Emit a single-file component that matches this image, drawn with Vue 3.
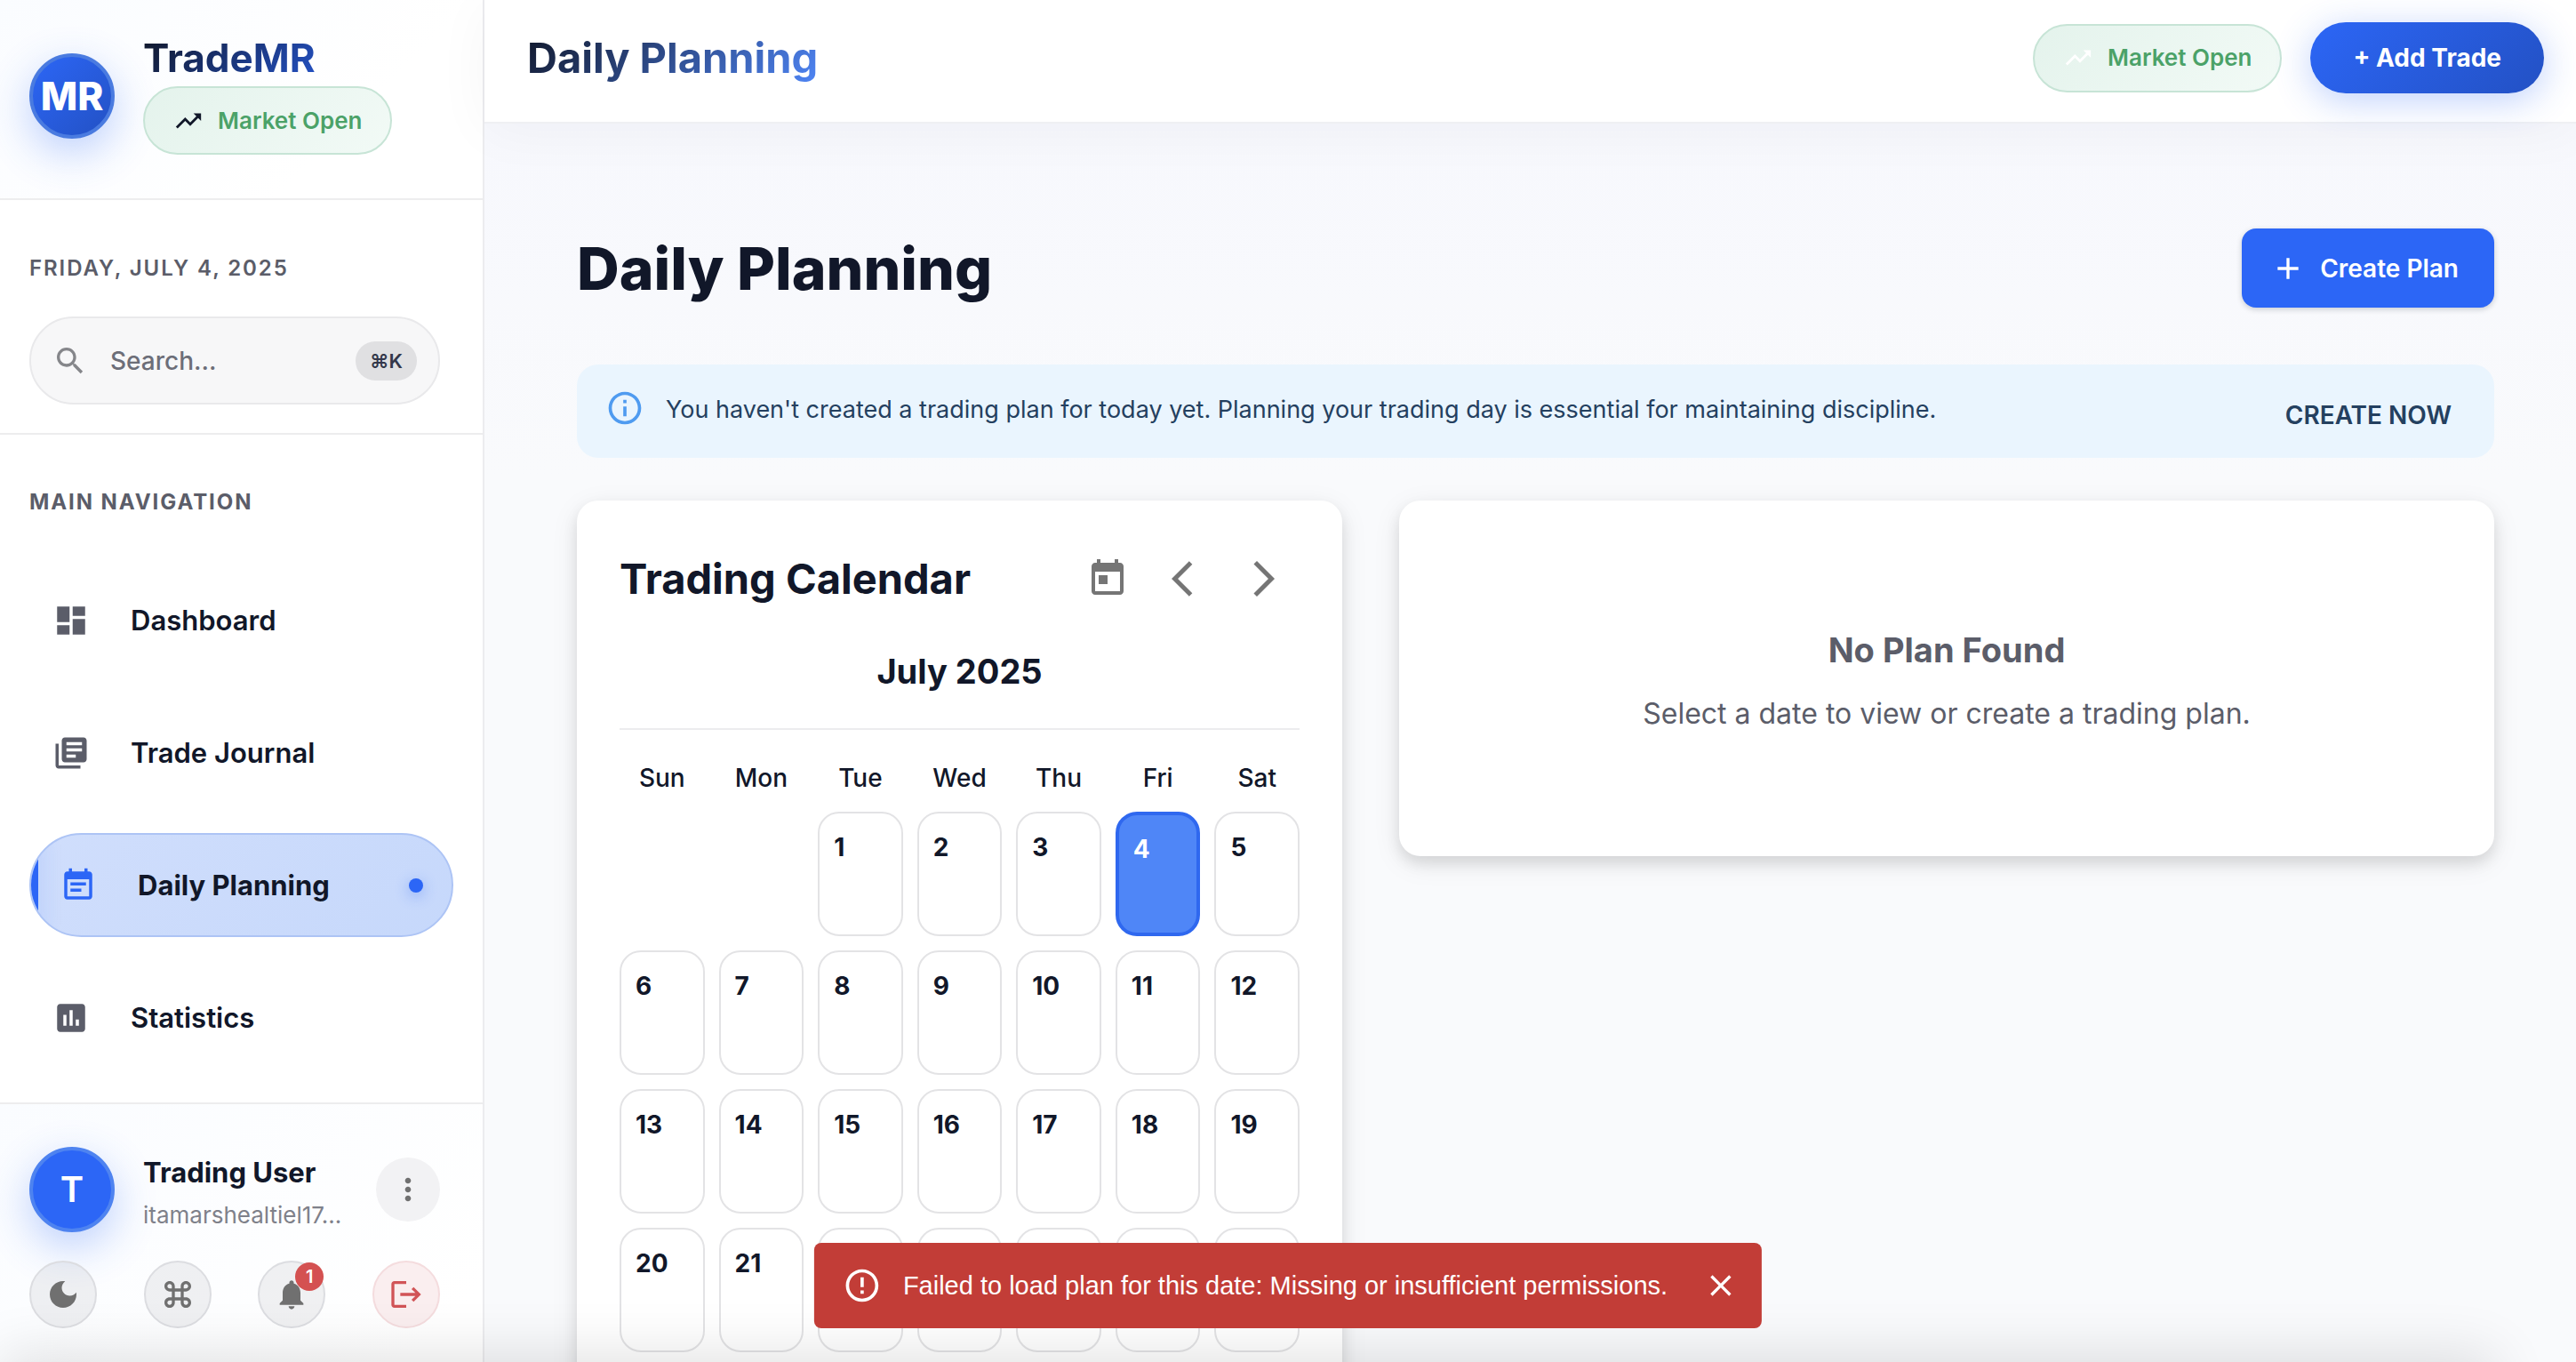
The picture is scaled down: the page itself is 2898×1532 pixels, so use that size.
<script setup>
import { ref } from 'vue'

const icons = {
  trend: 'm16 6 2.29 2.29-4.88 4.88-4-4L2 16.59 3.41 18l6-6 4 4 6.3-6.29L22 12V6z',
  search: 'M15.5 14h-.79l-.28-.27C15.41 12.59 16 11.11 16 9.5 16 5.91 13.09 3 9.5 3S3 5.91 3 9.5 5.91 16 9.5 16c1.61 0 3.09-.59 4.23-1.57l.27.28v.79l5 4.99L20.49 19zm-6 0C7.01 14 5 11.99 5 9.5S7.01 5 9.5 5 14 7.01 14 9.5 11.99 14 9.5 14',
  dashboard: 'M3 13h8V3H3zm0 8h8v-6H3zm10 0h8V11h-8zm0-18v6h8V3z',
  journal: 'M4 6H2v14c0 1.1.9 2 2 2h14v-2H4zm16-4H8c-1.1 0-2 .9-2 2v12c0 1.1.9 2 2 2h12c1.1 0 2-.9 2-2V4c0-1.1-.9-2-2-2m-1 9H9V9h10zm-4 4H9v-2h6zm4-8H9V5h10z',
  planning: 'M17 10H7v2h10zm2-7h-1V1h-2v2H8V1H6v2H5c-1.11 0-1.99.9-1.99 2L3 19c0 1.1.89 2 2 2h14c1.1 0 2-.9 2-2V5c0-1.1-.9-2-2-2m0 16H5V8h14zm-5-5H7v2h7z',
  stats: 'M19 3H5c-1.1 0-2 .9-2 2v14c0 1.1.9 2 2 2h14c1.1 0 2-.9 2-2V5c0-1.1-.9-2-2-2M9 17H7v-7h2zm4 0h-2V7h2zm4 0h-2v-4h2z',
  more: 'M12 8c1.1 0 2-.9 2-2s-.9-2-2-2-2 .9-2 2 .9 2 2 2m0 2c-1.1 0-2 .9-2 2s.9 2 2 2 2-.9 2-2-.9-2-2-2m0 6c-1.1 0-2 .9-2 2s.9 2 2 2 2-.9 2-2-.9-2-2-2',
  moon: 'M12 3c-4.97 0-9 4.03-9 9s4.03 9 9 9 9-4.03 9-9c0-.46-.04-.92-.1-1.36-.98 1.37-2.58 2.26-4.4 2.26-2.98 0-5.4-2.42-5.4-5.4 0-1.81.89-3.42 2.26-4.4-.44-.06-.9-.1-1.36-.1',
  command: 'M17.5 3C15.57 3 14 4.57 14 6.5V8h-4V6.5C10 4.57 8.43 3 6.5 3S3 4.57 3 6.5 4.57 10 6.5 10H8v4H6.5C4.57 14 3 15.57 3 17.5S4.57 21 6.5 21s3.5-1.57 3.5-3.5V16h4v1.5c0 1.93 1.57 3.5 3.5 3.5s3.5-1.57 3.5-3.5-1.57-3.5-3.5-3.5H16v-4h1.5c1.93 0 3.5-1.57 3.5-3.5S19.43 3 17.5 3M16 8V6.5c0-.83.67-1.5 1.5-1.5s1.5.67 1.5 1.5S18.33 8 17.5 8zM6.5 8C5.67 8 5 7.33 5 6.5S5.67 5 6.5 5 8 5.67 8 6.5V8zm3.5 6v-4h4v4zm7.5 5c-.83 0-1.5-.67-1.5-1.5V16h1.5c.83 0 1.5.67 1.5 1.5s-.67 1.5-1.5 1.5m-11 0c-.83 0-1.5-.67-1.5-1.5S5.67 16 6.5 16H8v1.5c0 .83-.67 1.5-1.5 1.5',
  bell: 'M12 22c1.1 0 2-.9 2-2h-4c0 1.1.89 2 2 2m6-6v-5c0-3.07-1.64-5.64-4.5-6.32V4c0-.83-.67-1.5-1.5-1.5s-1.5.67-1.5 1.5v.68C7.63 5.36 6 7.92 6 11v5l-2 2v1h16v-1z',
  logout: 'm17 7-1.41 1.41L18.17 11H8v2h10.17l-2.58 2.58L17 17l5-5zM4 5h8V3H4c-1.1 0-2 .9-2 2v14c0 1.1.9 2 2 2h8v-2H4z',
  plus: 'M19 13h-6v6h-2v-6H5v-2h6V5h2v6h6z',
  info: 'M11 7h2v2h-2zm0 4h2v6h-2zm1-9C6.48 2 2 6.48 2 12s4.48 10 10 10 10-4.48 10-10S17.52 2 12 2m0 18c-4.41 0-8-3.59-8-8s3.59-8 8-8 8 3.59 8 8-3.59 8-8 8',
  today: 'M19 3h-1V1h-2v2H8V1H6v2H5c-1.11 0-1.99.9-1.99 2L3 19c0 1.1.89 2 2 2h14c1.1 0 2-.9 2-2V5c0-1.1-.9-2-2-2m0 16H5V8h14zM7 10h5v5H7z',
  back: 'M11.67 3.87 9.9 2.1 0 12l9.9 9.9 1.77-1.77L3.54 12z',
  forward: 'M6.23 20.23 8 22l10-10L8 2 6.23 3.77 14.46 12z',
  error: 'M11 15h2v2h-2zm0-8h2v6h-2zm.99-5C6.47 2 2 6.48 2 12s4.47 10 9.99 10C17.52 22 22 17.52 22 12S17.52 2 11.99 2M12 20c-4.42 0-8-3.58-8-8s3.58-8 8-8 8 3.58 8 8-3.58 8-8 8',
  close: 'M19 6.41 17.59 5 12 10.59 6.41 5 5 6.41 10.59 12 5 17.59 6.41 19 12 13.41 17.59 19 19 17.59 13.41 12z',
}

const nav = [
  { label: 'Dashboard', icon: icons.dashboard },
  { label: 'Trade Journal', icon: icons.journal },
  { label: 'Daily Planning', icon: icons.planning, active: true },
  { label: 'Statistics', icon: icons.stats },
]

const weekdays = ['Sun', 'Mon', 'Tue', 'Wed', 'Thu', 'Fri', 'Sat']
const leadingBlanks = 2
const selectedDay = ref(4)
const query = ref('')
</script>

<template>
  <div class="app">
    <aside class="sidebar">
      <div class="brand">
        <div class="circle logo">MR</div>
        <div class="brand-info">
          <div class="brand-name">TradeMR</div>
          <div class="market">
            <svg viewBox="0 0 24 24"><path :d="icons.trend" /></svg>
            <span>Market Open</span>
          </div>
        </div>
      </div>

      <div class="tools">
        <div class="overline">Friday, July 4, 2025</div>
        <label class="search">
          <svg viewBox="0 0 24 24"><path :d="icons.search" /></svg>
          <input v-model="query" type="text" placeholder="Search..." aria-label="Search" />
          <kbd>⌘K</kbd>
        </label>
      </div>

      <nav class="nav">
        <div class="overline heavy">Main Navigation</div>
        <ul>
          <li v-for="item in nav" :key="item.label">
            <a href="#" :class="{ active: item.active }">
              <svg viewBox="0 0 24 24"><path :d="item.icon" /></svg>
              <span>{{ item.label }}</span>
              <i v-if="item.active" class="dot"></i>
            </a>
          </li>
        </ul>
      </nav>

      <div class="account">
        <div class="user">
          <div class="circle avatar">T</div>
          <div class="who">
            <div class="name">Trading User</div>
            <div class="mail">itamarshealtiel17...</div>
          </div>
          <button class="more" aria-label="Account menu">
            <svg viewBox="0 0 24 24"><path :d="icons.more" /></svg>
          </button>
        </div>
        <div class="actions">
          <button aria-label="Dark mode"><svg viewBox="0 0 24 24"><path :d="icons.moon" /></svg></button>
          <button aria-label="Commands"><svg viewBox="0 0 24 24"><path :d="icons.command" /></svg></button>
          <button aria-label="Notifications">
            <svg viewBox="0 0 24 24"><path :d="icons.bell" /></svg>
            <span class="badge">1</span>
          </button>
          <button class="logout" aria-label="Log out"><svg viewBox="0 0 24 24"><path :d="icons.logout" /></svg></button>
        </div>
      </div>
    </aside>

    <div class="main">
      <header class="topbar">
        <div class="topbar-title">Daily Planning</div>
        <div class="topbar-side">
          <div class="market pale">
            <svg viewBox="0 0 24 24"><path :d="icons.trend" /></svg>
            <span>Market Open</span>
          </div>
          <button class="add-trade">+ Add Trade</button>
        </div>
      </header>

      <main class="content">
        <div class="heading">
          <h1>Daily Planning</h1>
          <button class="create">
            <svg viewBox="0 0 24 24"><path :d="icons.plus" /></svg>
            <span>Create Plan</span>
          </button>
        </div>

        <div class="alert" role="status">
          <svg viewBox="0 0 24 24"><path :d="icons.info" /></svg>
          <p>You haven't created a trading plan for today yet. Planning your trading day is essential for maintaining discipline.</p>
          <button>CREATE NOW</button>
        </div>

        <div class="columns">
          <section class="card calendar">
            <div class="cal-head">
              <h2>Trading Calendar</h2>
              <div class="cal-nav">
                <button class="today" aria-label="Today"><svg viewBox="0 0 24 24"><path :d="icons.today" /></svg></button>
                <button aria-label="Previous month"><svg viewBox="0 0 24 24"><path :d="icons.back" /></svg></button>
                <button aria-label="Next month"><svg viewBox="0 0 24 24"><path :d="icons.forward" /></svg></button>
              </div>
            </div>
            <h3>July 2025</h3>
            <div class="grid weekdays">
              <span v-for="d in weekdays" :key="d">{{ d }}</span>
            </div>
            <div class="grid days">
              <span v-for="b in leadingBlanks" :key="'b' + b"></span>
              <button
                v-for="day in 31"
                :key="day"
                :class="{ selected: day === selectedDay }"
                @click="selectedDay = day"
              >{{ day }}</button>
            </div>
          </section>

          <section class="card empty">
            <h3>No Plan Found</h3>
            <p>Select a date to view or create a trading plan.</p>
          </section>
        </div>
      </main>
    </div>

    <div class="bottom-shade"></div>

    <div class="toast" role="alert">
      <svg class="toast-icon" viewBox="0 0 24 24"><path :d="icons.error" /></svg>
      <span>Failed to load plan for this date: Missing or insufficient permissions.</span>
      <button aria-label="Close"><svg viewBox="0 0 24 24"><path :d="icons.close" /></svg></button>
    </div>
  </div>
</template>

<style>
body {
  margin: 0;
  background: #f9fafc;
}
</style>

<style scoped>
.app,
.app * {
  box-sizing: border-box;
}

.app {
  display: flex;
  height: 100vh;
  overflow: hidden;
  font-family: Inter, 'Liberation Sans', sans-serif;
  font-size: 28px;
  line-height: 40px;
  color: #111729;
}

h1,
h2,
h3,
p,
ul {
  margin: 0;
  padding: 0;
}

button {
  display: flex;
  align-items: center;
  justify-content: center;
  border: 0;
  padding: 0;
  background: none;
  font: inherit;
  color: inherit;
  cursor: pointer;
}

svg {
  display: block;
  flex: none;
  width: 40px;
  height: 40px;
  fill: currentColor;
}

/* Sidebar */
.sidebar {
  display: flex;
  flex: none;
  flex-direction: column;
  width: 545px;
  border-right: 2px solid #ececef;
  background: #fff;
}

.brand {
  display: flex;
  align-items: center;
  gap: 32px;
  height: 225px;
  padding: 0 33px 8px;
  border-bottom: 2px solid #ededee;
  background: linear-gradient(135deg, #fafcff, #fff 70%);
}

.circle {
  display: flex;
  flex: none;
  align-items: center;
  justify-content: center;
  width: 96px;
  height: 96px;
  border: 4px solid #4e83f0;
  border-radius: 50%;
  background: #2c66f6;
  box-shadow: 0 16px 48px rgba(44, 102, 246, 0.3);
  color: #fff;
  font-size: 40px;
  font-weight: 600;
}

.logo {
  border-color: #4a7be0;
  background: linear-gradient(135deg, #2c66f6, #2351c4);
  font-size: 44px;
  font-weight: 800;
}

.brand-name {
  width: max-content;
  margin-bottom: 8px;
  font-size: 44px;
  font-weight: 700;
  line-height: 48px;
  background: linear-gradient(135deg, #111729, #2351c4);
  background-clip: text;
  color: transparent;
}

.market {
  display: flex;
  align-items: center;
  gap: 16px;
  height: 77px;
  padding: 0 32px;
  border: 2px solid #c7e4d6;
  border-radius: 40px;
  background: linear-gradient(135deg, #e4f3ec, #f2faf6);
  font-size: 26px;
  font-weight: 600;
}

.market svg {
  width: 34px;
  height: 34px;
}

.market span {
  color: #4ba268;
}

.market.pale svg {
  color: #fff;
}

.overline {
  font-size: 24px;
  font-weight: 600;
  line-height: 32px;
  letter-spacing: 0.08em;
  text-transform: uppercase;
  color: #5b5d69;
}

.overline.heavy {
  font-weight: 700;
}

.tools {
  height: 264px;
  padding: 61px 48px 0 33px;
  border-bottom: 2px solid #ededee;
}

.search {
  display: flex;
  align-items: center;
  height: 99px;
  margin-top: 38px;
  padding: 0 24px;
  border: 2px solid #e9e9eb;
  border-radius: 50px;
  background: #f7f7f8;
}

.search svg {
  color: #85868a;
}

.search input {
  flex: 1;
  min-width: 0;
  margin-left: 25px;
  padding: 0;
  border: 0;
  outline: 0;
  background: none;
  font: inherit;
  font-weight: 500;
}

.search input::placeholder {
  color: #6c6e78;
  opacity: 1;
}

.search kbd {
  padding: 0 16px;
  border-radius: 24px;
  background: #e0e0e2;
  font: 600 22px/44px Inter, 'DejaVu Sans', sans-serif;
  color: #33374a;
}

.nav {
  flex: 1;
  padding: 60px 33px 0;
}

.nav ul {
  display: flex;
  flex-direction: column;
  gap: 32px;
  margin-top: 58px;
  list-style: none;
}

.nav a {
  position: relative;
  display: flex;
  align-items: center;
  gap: 46px;
  height: 117px;
  padding: 0 32px 0 26px;
  border-radius: 60px;
  font-size: 31px;
  font-weight: 600;
  color: inherit;
  text-decoration: none;
  overflow: hidden;
}

.nav svg {
  width: 42px;
  height: 42px;
  color: #5b5d69;
}

.nav .active {
  padding-left: 32px;
  border: 2px solid #adc4f5;
  background: linear-gradient(135deg, #d0defc, #c6d8fb);
  font-weight: 700;
}

.nav .active::before {
  content: '';
  position: absolute;
  inset: 0 auto 0 0;
  width: 8px;
  background: #2c66f6;
  box-shadow: 0 0 24px rgba(44, 102, 246, 0.25);
}

.nav .active svg {
  color: #2c66f6;
}

.dot {
  width: 16px;
  height: 16px;
  margin-left: auto;
  border-radius: 50%;
  background: #2c66f6;
  box-shadow: 0 4px 16px rgba(44, 102, 246, 0.4);
}

.account {
  height: 292px;
  padding: 48px 48px 0 33px;
  border-top: 2px solid #ededee;
  background: linear-gradient(135deg, #fafcff, #fff 90%);
}

.user {
  display: flex;
  align-items: center;
  gap: 32px;
  height: 96px;
}

.who {
  flex: 1;
  min-width: 0;
  padding-top: 10px;
}

.name {
  font-size: 31px;
  font-weight: 700;
  line-height: 48px;
}

.mail {
  font-size: 26px;
  line-height: 48px;
  color: #7f818a;
}

.more {
  width: 72px;
  height: 72px;
  border-radius: 50%;
  background: #f2f2f4;
  color: #707070;
}

.actions {
  display: flex;
  justify-content: space-between;
  margin-top: 32px;
}

.actions button {
  position: relative;
  width: 76px;
  height: 76px;
  border: 2px solid #dcdde1;
  border-radius: 50%;
  background: rgba(17, 23, 41, 0.06);
  color: #707070;
}

.actions .logout {
  border-color: #f4dcde;
  background: #faeeef;
  color: #d15457;
}

.badge {
  position: absolute;
  top: 0;
  right: 0;
  width: 32px;
  height: 32px;
  border-radius: 50%;
  background: #d45151;
  font-size: 20px;
  font-weight: 600;
  line-height: 32px;
  text-align: center;
  color: #fff;
}

/* Top bar */
.main {
  display: flex;
  flex: 1;
  flex-direction: column;
  min-width: 0;
}

.topbar {
  position: relative;
  display: flex;
  align-items: center;
  justify-content: space-between;
  flex: none;
  height: 139px;
  padding: 0 36px 7px 48px;
  border-bottom: 2px solid #eff0f3;
  background: #fff;
  box-shadow: 0 8px 64px rgba(17, 23, 41, 0.04);
}

.topbar-title {
  font-size: 47px;
  font-weight: 700;
  line-height: 64px;
  background: linear-gradient(135deg, #111729, #4f86f7);
  background-clip: text;
  color: transparent;
}

.topbar-side {
  display: flex;
  align-items: center;
  gap: 32px;
}

.add-trade {
  height: 80px;
  padding: 0 48px;
  border-radius: 40px;
  background: linear-gradient(135deg, #2c66f6, #2351c4);
  box-shadow: 0 8px 40px rgba(44, 102, 246, 0.3);
  font-weight: 700;
  color: #fff;
}

/* Content */
.content {
  flex: 1;
  min-height: 0;
  padding: 118px 92px 96px 104px;
  background: linear-gradient(#f7f8fd, #f9fafc 400px);
  overflow-y: auto;
  scrollbar-width: none;
}

.heading {
  display: flex;
  align-items: center;
  justify-content: space-between;
}

h1 {
  font-size: 66px;
  font-weight: 800;
  line-height: 80px;
}

.create {
  gap: 16px;
  height: 89px;
  padding: 0 40px 0 32px;
  border-radius: 16px;
  background: #2c66f6;
  box-shadow: 0 2px 6px rgba(17, 23, 41, 0.2);
  font-weight: 600;
  color: #fff;
}

.alert {
  display: flex;
  align-items: center;
  height: 105px;
  margin-top: 64px;
  padding: 0 48px 0 32px;
  border-radius: 24px;
  background: #eaf5fe;
  color: #24405f;
}

.alert svg {
  width: 44px;
  height: 44px;
  margin-bottom: 8px;
  color: #4f9bf0;
}

.alert p {
  flex: 1;
  margin: 0 0 4px 24px;
  font-size: 27px;
}

.alert button {
  margin-top: 8px;
  font-weight: 600;
}

.columns {
  display: grid;
  grid-template-columns: minmax(0, 861fr) minmax(0, 1232fr);
  align-items: start;
  gap: 64px;
  margin-top: 48px;
}

.card {
  border-radius: 24px;
  background: #fff;
  box-shadow: 0 8px 16px rgba(0, 0, 0, 0.1), 0 8px 32px rgba(0, 0, 0, 0.08);
}

.calendar {
  padding: 48px;
}

.cal-head {
  display: flex;
  align-items: center;
  justify-content: space-between;
}

h2 {
  font-size: 47px;
  font-weight: 700;
  line-height: 64px;
}

.cal-nav {
  display: flex;
  color: #757575;
}

.cal-nav button {
  width: 80px;
  height: 80px;
}

.cal-nav .today {
  margin-right: 16px;
}

.cal-nav svg {
  width: 48px;
  height: 48px;
}

h3 {
  font-size: 38px;
  font-weight: 700;
  line-height: 64px;
}

.calendar h3 {
  margin-top: 32px;
  padding-bottom: 32px;
  border-bottom: 2px solid #ececee;
  text-align: center;
}

.grid {
  display: grid;
  grid-template-columns: repeat(7, minmax(0, 1fr));
  gap: 16px;
}

.weekdays {
  margin-top: 34px;
  font-weight: 500;
  text-align: center;
}

.days {
  margin-top: 18px;
}

.days button {
  align-items: flex-start;
  justify-content: flex-start;
  height: 140px;
  padding: 16px;
  border: 2px solid #e3e3e5;
  border-radius: 24px;
  background: #fff;
  font-weight: 700;
  line-height: 44px;
}

.days .selected {
  border: 4px solid #2f68ef;
  background: #4f86f7;
  color: #fff;
}

.empty {
  display: flex;
  flex-direction: column;
  align-items: center;
  justify-content: center;
  min-height: 400px;
  padding: 56px 48px 48px;
  color: #5b5d69;
  text-align: center;
}

.empty h3 {
  line-height: 72px;
}

.empty p {
  font-size: 32px;
  line-height: 72px;
}

/* Overlays */
.bottom-shade {
  position: fixed;
  top: 100%;
  left: 0;
  right: 92px;
  height: 100px;
  box-shadow: 0 -8px 64px rgba(0, 0, 0, 0.12);
}

.toast {
  position: fixed;
  bottom: 38px;
  left: 50%;
  transform: translateX(-50%);
  display: flex;
  align-items: center;
  width: max-content;
  height: 96px;
  padding: 0 26px 0 32px;
  border-radius: 8px;
  background: #c23d37;
  font-family: 'Liberation Sans', sans-serif;
  font-size: 29px;
  color: #fff;
}

.toast-icon {
  width: 44px;
  height: 44px;
}

.toast span {
  margin: 0 40px 0 24px;
  white-space: nowrap;
}
</style>
